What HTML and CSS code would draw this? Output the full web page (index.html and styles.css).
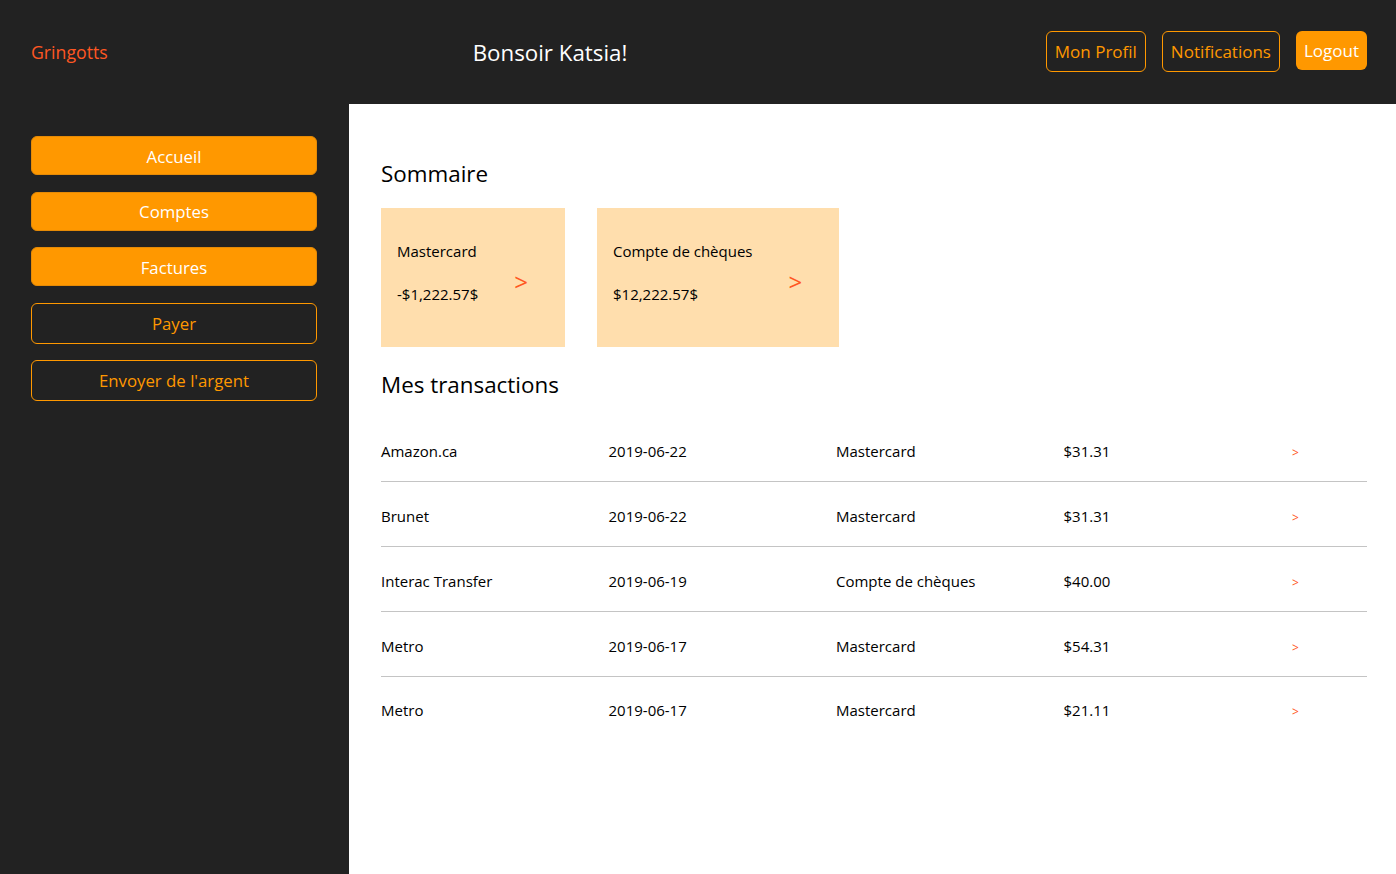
FILE: index.html
```html
<!DOCTYPE html>
<html lang="fr">
<head>
<meta charset="utf-8">
<title>Gringotts</title>
<link rel="stylesheet" href="styles.css">
</head>
<body>
<div class="app">
  <header class="topbar">
    <div class="brand">Gringotts</div>
    <div class="greeting">Bonsoir Katsia!</div>
    <nav class="top-actions">
      <button class="btn btn-outline">Mon Profil</button>
      <button class="btn btn-outline">Notifications</button>
      <button class="btn btn-fill">Logout</button>
    </nav>
  </header>
  <div class="body">
    <aside class="sidebar">
      <button class="side-btn side-fill">Accueil</button>
      <button class="side-btn side-fill">Comptes</button>
      <button class="side-btn side-fill">Factures</button>
      <button class="side-btn side-outline">Payer</button>
      <button class="side-btn side-outline">Envoyer de l'argent</button>
    </aside>
    <main class="main">
      <h2 class="section-title">Sommaire</h2>
      <div class="cards">
        <div class="card">
          <div class="card-info">
            <div class="card-name">Mastercard</div>
            <div class="card-amount">-$1,222.57$</div>
          </div>
          <div class="card-chev">&gt;</div>
        </div>
        <div class="card">
          <div class="card-info">
            <div class="card-name">Compte de chèques</div>
            <div class="card-amount">$12,222.57$</div>
          </div>
          <div class="card-chev">&gt;</div>
        </div>
      </div>
      <h2 class="section-title tx-title">Mes transactions</h2>
      <div class="tx-list">
        <div class="tx-row"><span>Amazon.ca</span><span>2019-06-22</span><span>Mastercard</span><span>$31.31</span><span class="tx-chev">&gt;</span></div>
        <div class="tx-row"><span>Brunet</span><span>2019-06-22</span><span>Mastercard</span><span>$31.31</span><span class="tx-chev">&gt;</span></div>
        <div class="tx-row"><span>Interac Transfer</span><span>2019-06-19</span><span>Compte de chèques</span><span>$40.00</span><span class="tx-chev">&gt;</span></div>
        <div class="tx-row"><span>Metro</span><span>2019-06-17</span><span>Mastercard</span><span>$54.31</span><span class="tx-chev">&gt;</span></div>
        <div class="tx-row"><span>Metro</span><span>2019-06-17</span><span>Mastercard</span><span>$21.11</span><span class="tx-chev">&gt;</span></div>
      </div>
    </main>
  </div>
</div>
</body>
</html>
```
FILE: styles.css
```css
* { box-sizing: border-box; }
html, body { margin: 0; padding: 0; }
body {
  font-family: "Open Sans", "Noto Sans", sans-serif;
  background: #222222;
  color: #000;
}
.app {
  display: flex;
  flex-direction: column;
  height: 100vh;
}
.topbar {
  height: 104px;
  flex: none;
  background: #222222;
  display: grid;
  grid-template-columns: 369px 300px 1fr;
  align-items: start;
  padding: 31px 29px 0 31px;
}
.brand {
  color: #ff5722;
  font-size: 17.7px;
  line-height: 42px;
}
.greeting {
  color: #ffffff;
  font-size: 22.3px;
  line-height: 44px;
  text-align: center;
}
.top-actions {
  display: flex;
  justify-content: flex-end;
  align-items: flex-start;
  gap: 16px;
}
.btn {
  font-family: inherit;
  font-size: 17px;
  line-height: 23px;
  padding: 8px 8px;
  border-radius: 6px;
  cursor: pointer;
}
.btn-outline {
  background: transparent;
  color: #ff9800;
  border: 1px solid #ff9800;
}
.btn-fill {
  background: #ff9800;
  color: #ffffff;
  border: none;
}
.body {
  flex: 1;
  display: flex;
  min-height: 0;
}
.sidebar {
  width: 349px;
  flex: none;
  background: #222222;
  padding: 32px 32px 0 31px;
  display: flex;
  flex-direction: column;
  gap: 16.5px;
}
.side-btn {
  font-family: inherit;
  font-size: 16.8px;
  border-radius: 6px;
  width: 100%;
  cursor: pointer;
}
.side-fill {
  height: 39px;
  background: #ff9800;
  color: #ffffff;
  border: 1px solid #e58a06;
  padding-top: 2px;
}
.side-outline {
  height: 41px;
  background: transparent;
  color: #ff9800;
  border: 1px solid #ff9800;
}
.main {
  flex: 1;
  background: #ffffff;
  padding: 56px 29px 0 32px;
}
.section-title {
  margin: 0;
  font-size: 22.4px;
  font-weight: 400;
  line-height: 28px;
}
.cards {
  display: flex;
  gap: 32px;
  margin-top: 20px;
}
.card {
  background: #ffdead;
  height: 139px;
  display: flex;
  align-items: flex-start;
  gap: 36px;
  padding: 32px 37px 0 16px;
}
.card-info {
  font-size: 15px;
  line-height: 22px;
}
.card-amount {
  margin-top: 21px;
}
.card-chev {
  color: #ff5722;
  font-size: 24px;
  line-height: 30px;
  margin-top: 27px;
}
.tx-title {
  margin-top: 24px;
}
.tx-list {
  margin-top: 18px;
}
.tx-row {
  display: grid;
  grid-template-columns: repeat(4, 227.5px) 1fr;
  align-items: center;
  height: 65px;
  padding-top: 3px;
  border-bottom: 1px solid #c4c4c4;
  font-size: 15px;
}
.tx-row:last-child {
  border-bottom: none;
  padding-top: 1px;
}
.tx-chev {
  color: #ff5722;
  font-size: 12px;
  padding-top: 3px;
  padding-left: 1px;
}
```
